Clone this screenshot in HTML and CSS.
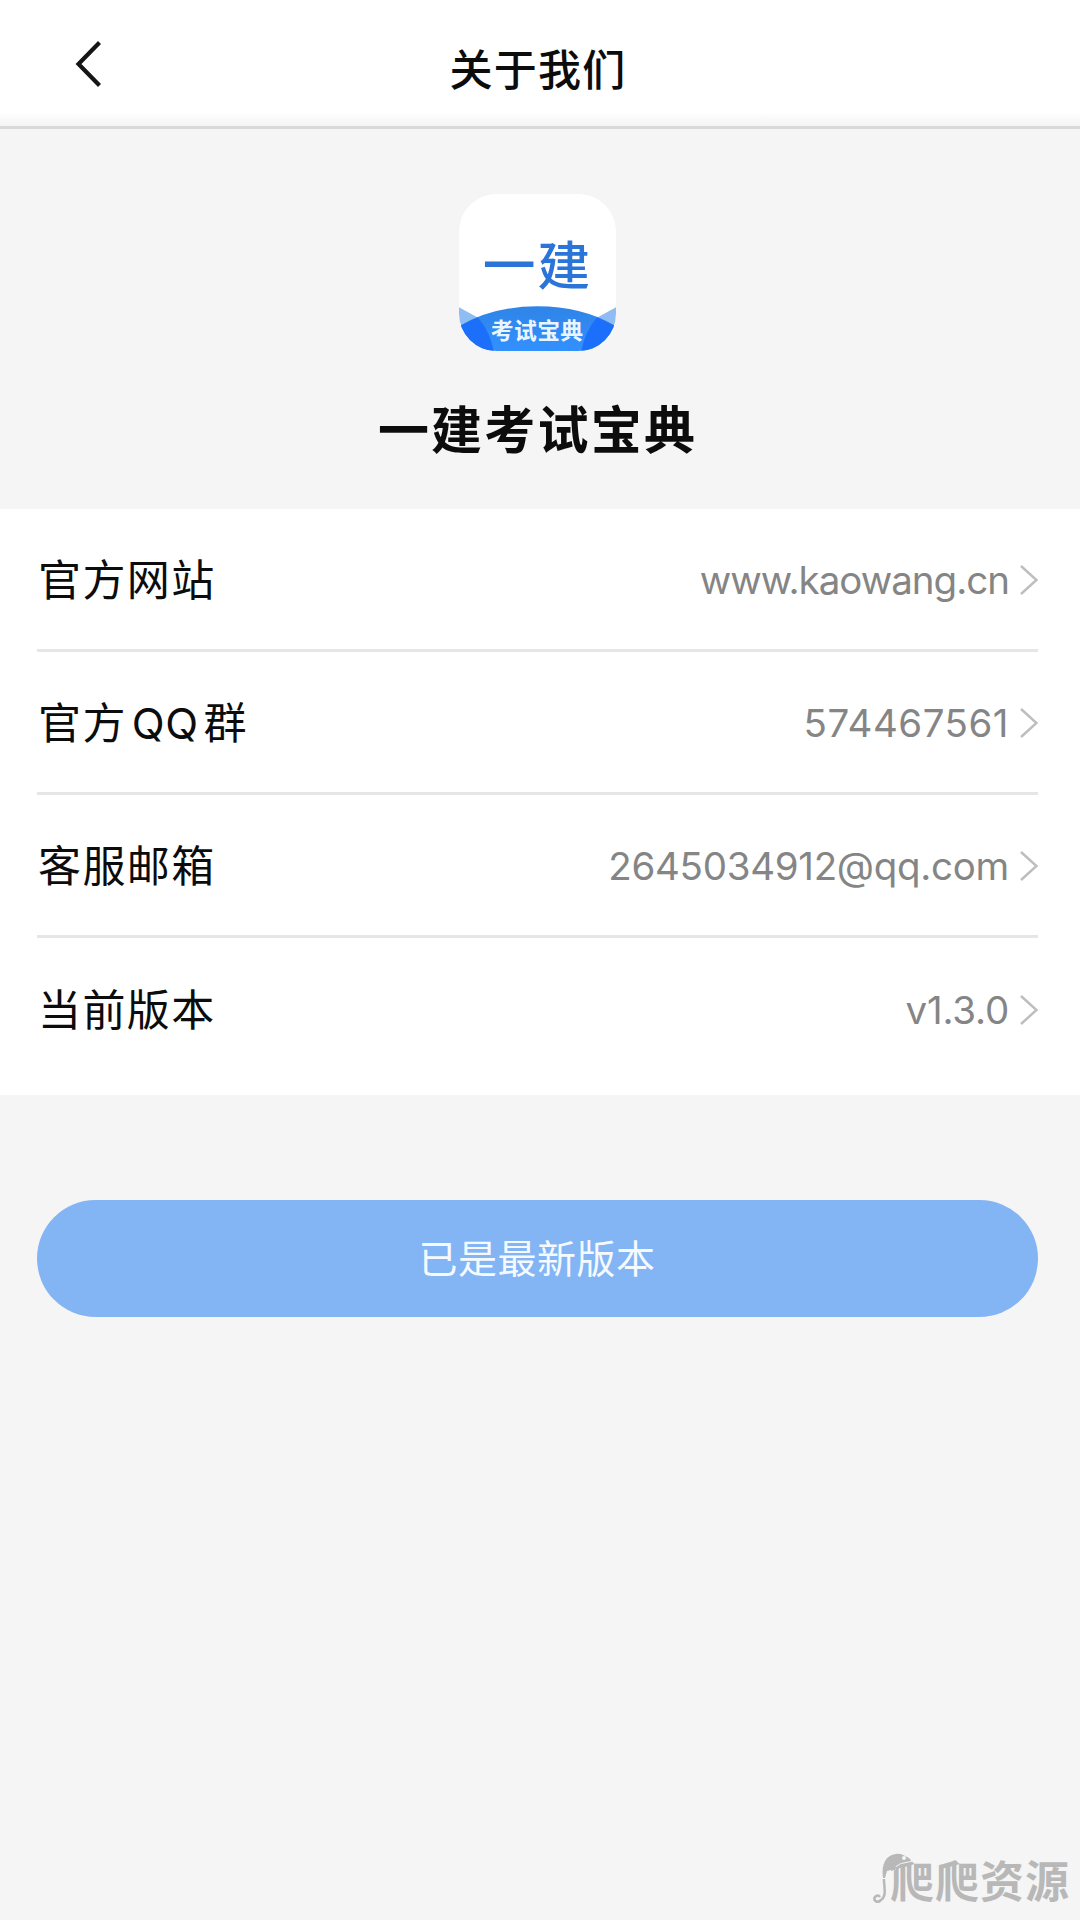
FILE: index.html
```html
<!DOCTYPE html>
<html lang="zh-CN">
<head>
<meta charset="utf-8">
<title>关于我们</title>
<link rel="stylesheet" href="styles.css">
</head>
<body>
<header class="navbar">
  <svg class="back" width="28" height="50" viewBox="0 0 28 50"><path d="M25.500 3.500 4.500 25l21 21.500"/></svg>
  <h1 class="title">关于我们</h1>
</header>
<main>
  <section class="brand">
    <svg class="logo" width="157" height="157" viewBox="0 0 158 158">
      <defs>
        <clipPath id="tile"><rect width="158" height="158" rx="38"/></clipPath>
        <linearGradient id="band" x1="0" y1="0" x2="0" y2="1"><stop offset="0" stop-color="#2f84e6"/><stop offset="1" stop-color="#3290ff"/></linearGradient>
      </defs>
      <g clip-path="url(#tile)">
        <rect width="158" height="158" fill="#fff"/>
        <path d="M0 114 22 126 35 158H0Z" fill="#8fbcf3"/>
        <path d="M158 114 136 126 123 158h35Z" fill="#8fbcf3"/>
        <path d="M0 133Q34 113 79 113t79 20v25H0Z" fill="url(#band)"/>
        <path d="M0 133 19 124Q31 138 35 158H0Z" fill="#1c6ffa"/>
        <path d="M158 133 139 124Q127 138 123 158h35Z" fill="#1c6ffa"/>
      </g>
      <text class="logo-main" x="24" y="92" textLength="108">一建</text>
      <text class="logo-sub" x="32" y="146" textLength="93">考试宝典</text>
    </svg>
    <h2 class="name">一建考试宝典</h2>
  </section>
  <ul class="list">
    <li class="row"><span class="label">官方网站</span><span class="value site">www.kaowang.cn</span><svg class="arrow" width="20" height="32" viewBox="0 0 20 32"><path d="M3 2 18.500 16 3 30"/></svg></li>
    <li class="row"><span class="label">官方<span class="latin">QQ</span>群</span><span class="value group">574467561</span><svg class="arrow" width="20" height="32" viewBox="0 0 20 32"><path d="M3 2 18.500 16 3 30"/></svg></li>
    <li class="row"><span class="label">客服邮箱</span><span class="value mail">2645034912@qq.com</span><svg class="arrow" width="20" height="32" viewBox="0 0 20 32"><path d="M3 2 18.500 16 3 30"/></svg></li>
    <li class="row"><span class="label">当前版本</span><span class="value version">v1.3.0</span><svg class="arrow" width="20" height="32" viewBox="0 0 20 32"><path d="M3 2 18.500 16 3 30"/></svg></li>
  </ul>
  <button class="update" type="button">已是最新版本</button>
</main>
<div class="watermark">
  <svg class="lizard" width="42" height="52" viewBox="0 0 42 52">
    <path class="tail" d="M13 17C9 27 17 42 9 47 5 51 1 47 3 44q3-3 5 0"/>
    <path class="body" d="M11 25C9 11 14 2 24 1c4-1 7 1 9 2 3 1 6 3 6 5l-10 2-5 3-1 3-8 2-2 7Z"/>
    <path class="leg" d="m29 11 1 2-11 4"/>
    <circle cx="32" cy="5" r="2"/>
  </svg>
  <span class="mark">爬爬资源</span>
</div>
</body>
</html>
```
FILE: styles.css
```css
* { box-sizing: border-box; }
body {
  margin: 0;
  height: 1920px;
  position: relative;
  background: #f5f5f5;
  color: #0c0c0c;
  font-family: Inter, "Noto Sans CJK SC", sans-serif;
}
.navbar {
  display: grid;
  grid-template-columns: 150px 1fr 150px;
  align-items: center;
  height: 129px;
  background: linear-gradient(#fff 112px, #f5f5f5 125px);
  border-bottom: 3px solid #d9d9d9;
}
.back { margin: 2px 0 0 74px; fill: none; stroke: #151515; stroke-width: 4.2; }
.title {
  margin: 14px 0 0;
  text-align: center;
  font-size: 43px;
  line-height: 60px;
  font-weight: 500;
  letter-spacing: 1.2px;
  padding-right: 4px;
}
.brand {
  display: flex;
  flex-direction: column;
  align-items: center;
  height: 380px;
  padding-top: 65px;
}
.logo { display: block; margin-right: 5px; }
.logo text { font-family: "Noto Sans CJK SC", sans-serif; }
.logo-main { font-size: 53px; font-weight: 500; fill: #2b74d8; }
.logo-sub { font-size: 23px; font-weight: 700; fill: #e9f5ff; }
.name {
  margin: 42px 5px 0 0;
  font-size: 51px;
  line-height: 76px;
  font-weight: 700;
  letter-spacing: 2.200px;
}
.list {
  margin: 0;
  padding: 0 41px 0 37px;
  height: 586px;
  background: #fff;
  list-style: none;
}
.row {
  display: flex;
  align-items: center;
  height: 143px;
  margin-right: 1px;
  padding-top: 2px;
  border-bottom: 3px solid #e6e6e6;
}
.row:last-child { border-bottom: 0; padding-top: 0; }
.label {
  flex: 1;
  padding-left: 1px;
  font-size: 43px;
  line-height: 60px;
  letter-spacing: 1.400px;
}
.latin { font-size: 43px; letter-spacing: 0.500px; margin: 0 5px; }
.value { font-size: 38.500px; color: #858585; }
.site { letter-spacing: -1px; }
.group { letter-spacing: 0.500px; }
.mail { letter-spacing: -0.300px; }
.version { letter-spacing: -0.200px; }
.arrow { margin-left: 9px; fill: none; stroke: #bebebe; stroke-width: 2.500; }
.update {
  display: block;
  width: 1001px;
  height: 117px;
  margin: 105px 0 0 37px;
  padding: 0 1px 5px 0;
  border: 0;
  border-radius: 59px;
  background: #83b4f3;
  color: #f4faff;
  font-family: "Noto Sans CJK SC", sans-serif;
  font-size: 39px;
  letter-spacing: 0.500px;
}
.watermark {
  position: absolute;
  left: 872px;
  top: 1853px;
  display: flex;
  color: #b8b8b8;
}
.lizard { position: relative; z-index: 1; margin-right: -24px; }
.tail { fill: none; stroke: #b8b8b8; stroke-width: 2.500; }
.body { fill: #b8b8b8; stroke: #f5f5f5; stroke-width: 2; paint-order: stroke; }
.leg { fill: none; stroke: #b8b8b8; stroke-width: 2; }
.lizard circle { fill: #f5f5f5; }
.mark {
  font-family: "Noto Sans CJK SC", sans-serif;
  font-size: 44px;
  line-height: 52px;
  font-weight: 700;
  letter-spacing: 1px;
}
```
